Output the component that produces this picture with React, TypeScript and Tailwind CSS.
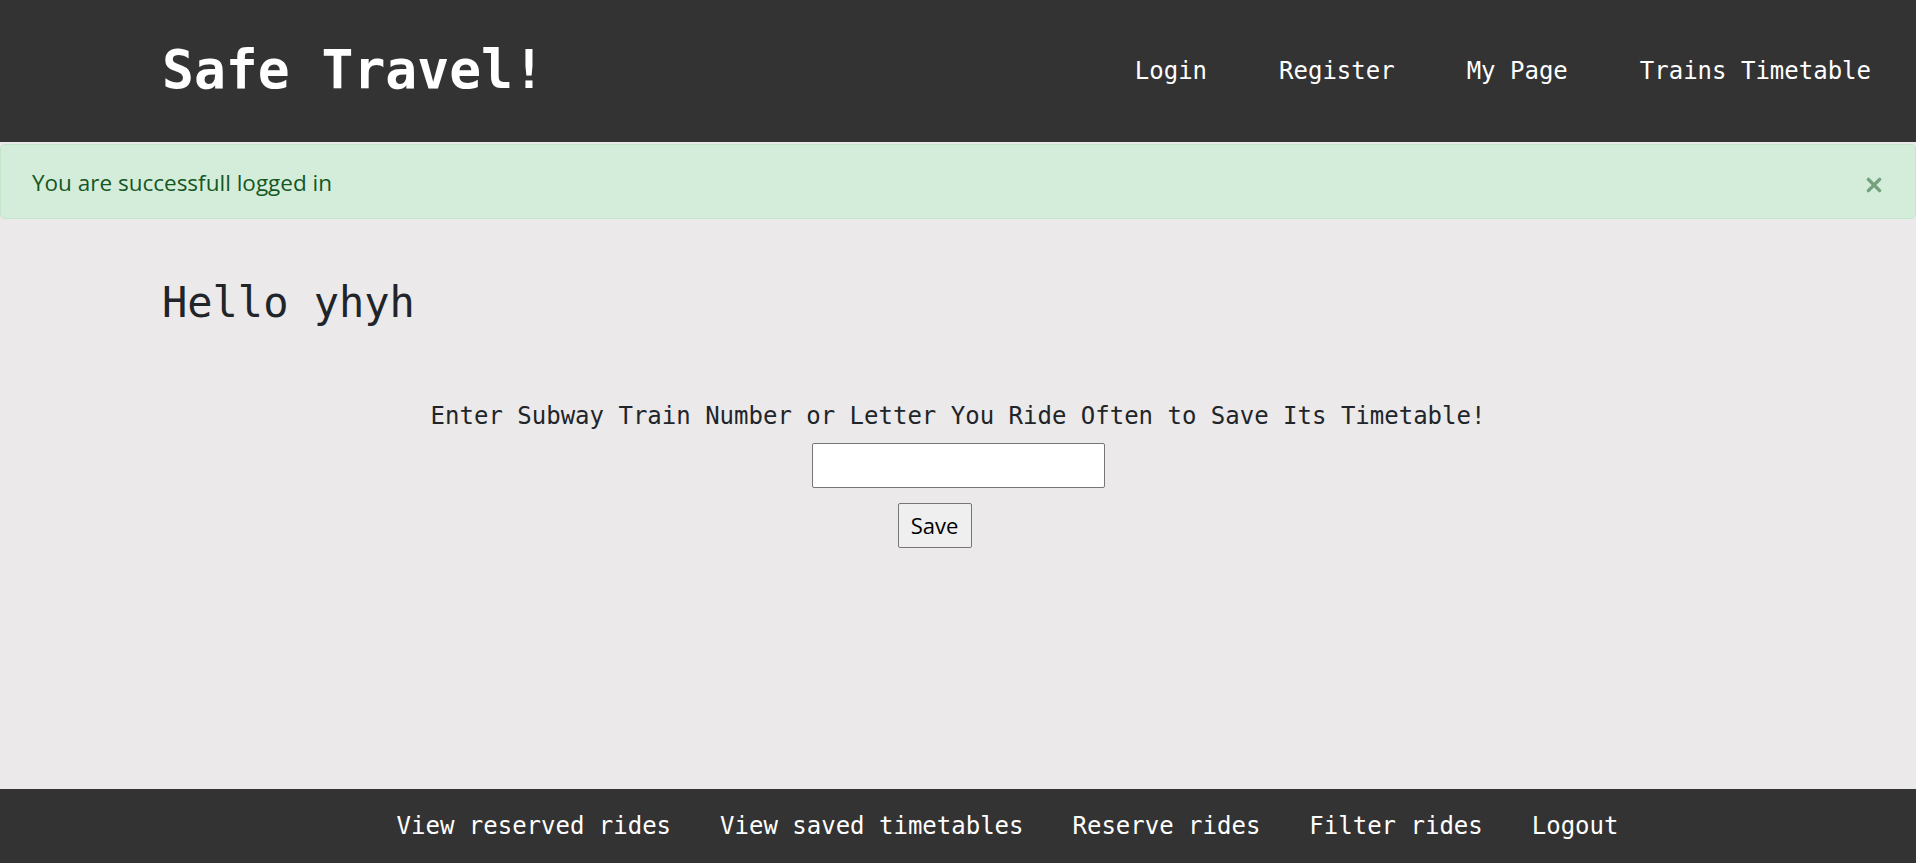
const mono = "font-['Consolas','DejaVu_Sans_Mono','Liberation_Mono',monospace]";
const sans = "font-['Open_Sans','Noto_Sans',sans-serif]";

const topLinks = ["Login", "Register", "My Page", "Trains Timetable"];
const bottomLinks = [
  "View reserved rides",
  "View saved timetables",
  "Reserve rides",
  "Filter rides",
  "Logout",
];

const App = () => {
  return (
    <div className={`h-[863px] overflow-hidden flex flex-col bg-[#ebe9ea] ${mono}`}>
      <header className="h-[142px] shrink-0 bg-[#333333] flex items-center justify-between pl-[162px] pr-[45px]">
        <h1 className="text-[53px] font-bold text-white mt-[-2px]">
          Safe Travel!
        </h1>
        <nav className="flex items-center gap-[72px] text-[24px] text-white">
          {topLinks.map((l) => (
            <a key={l} href="#" className="whitespace-pre">
              {l}
            </a>
          ))}
        </nav>
      </header>

      <div className="mt-[2px] h-[75px] shrink-0 border border-[#c3e6cb] bg-[#d4edda] rounded-[5px] flex items-center justify-between pl-[31px] pr-[32px]">
        <span className={`${sans} text-[22.5px] text-[#155724] mt-[2px]`}>
          You are successfull logged in
        </span>
        <button className="text-[#155724] opacity-50 w-[18px] h-[18px] mt-[6px]">
          <svg viewBox="0 0 16 16" className="w-full h-full">
            <path
              d="M3 3 L13 13 M13 3 L3 13"
              stroke="currentColor"
              strokeWidth="3"
              strokeLinecap="round"
            />
          </svg>
        </button>
      </div>

      <main className="flex-1 flex flex-col">
        <h2 className="pl-[162px] mt-[59px] text-[42px] text-[#212529] leading-[1.2]">
          Hello yhyh
        </h2>
        <form className="flex flex-col items-center mt-[74px]">
          <label className="text-[24px] text-[#212529] leading-[1.2]">
            Enter Subway Train Number or Letter You Ride Often to Save Its
            Timetable!
          </label>
          <input
            type="text"
            className="mt-[12px] w-[293px] h-[45px] bg-white border border-[#767676] rounded-[2px]"
          />
          <button
            type="button"
            className={`${sans} mt-[15px] mr-[47px] w-[74px] h-[45px] bg-[#efefef] border border-[#767676] rounded-[2px] text-[22px] text-black`}
          >
            Save
          </button>
        </form>
      </main>

      <footer className="h-[74px] shrink-0 bg-[#333333] flex items-center justify-center gap-[49px] pl-[99px] text-[24px] text-white">
        {bottomLinks.map((l) => (
          <a key={l} href="#" className="whitespace-pre">
            {l}
          </a>
        ))}
      </footer>
    </div>
  );
};

export default App;
